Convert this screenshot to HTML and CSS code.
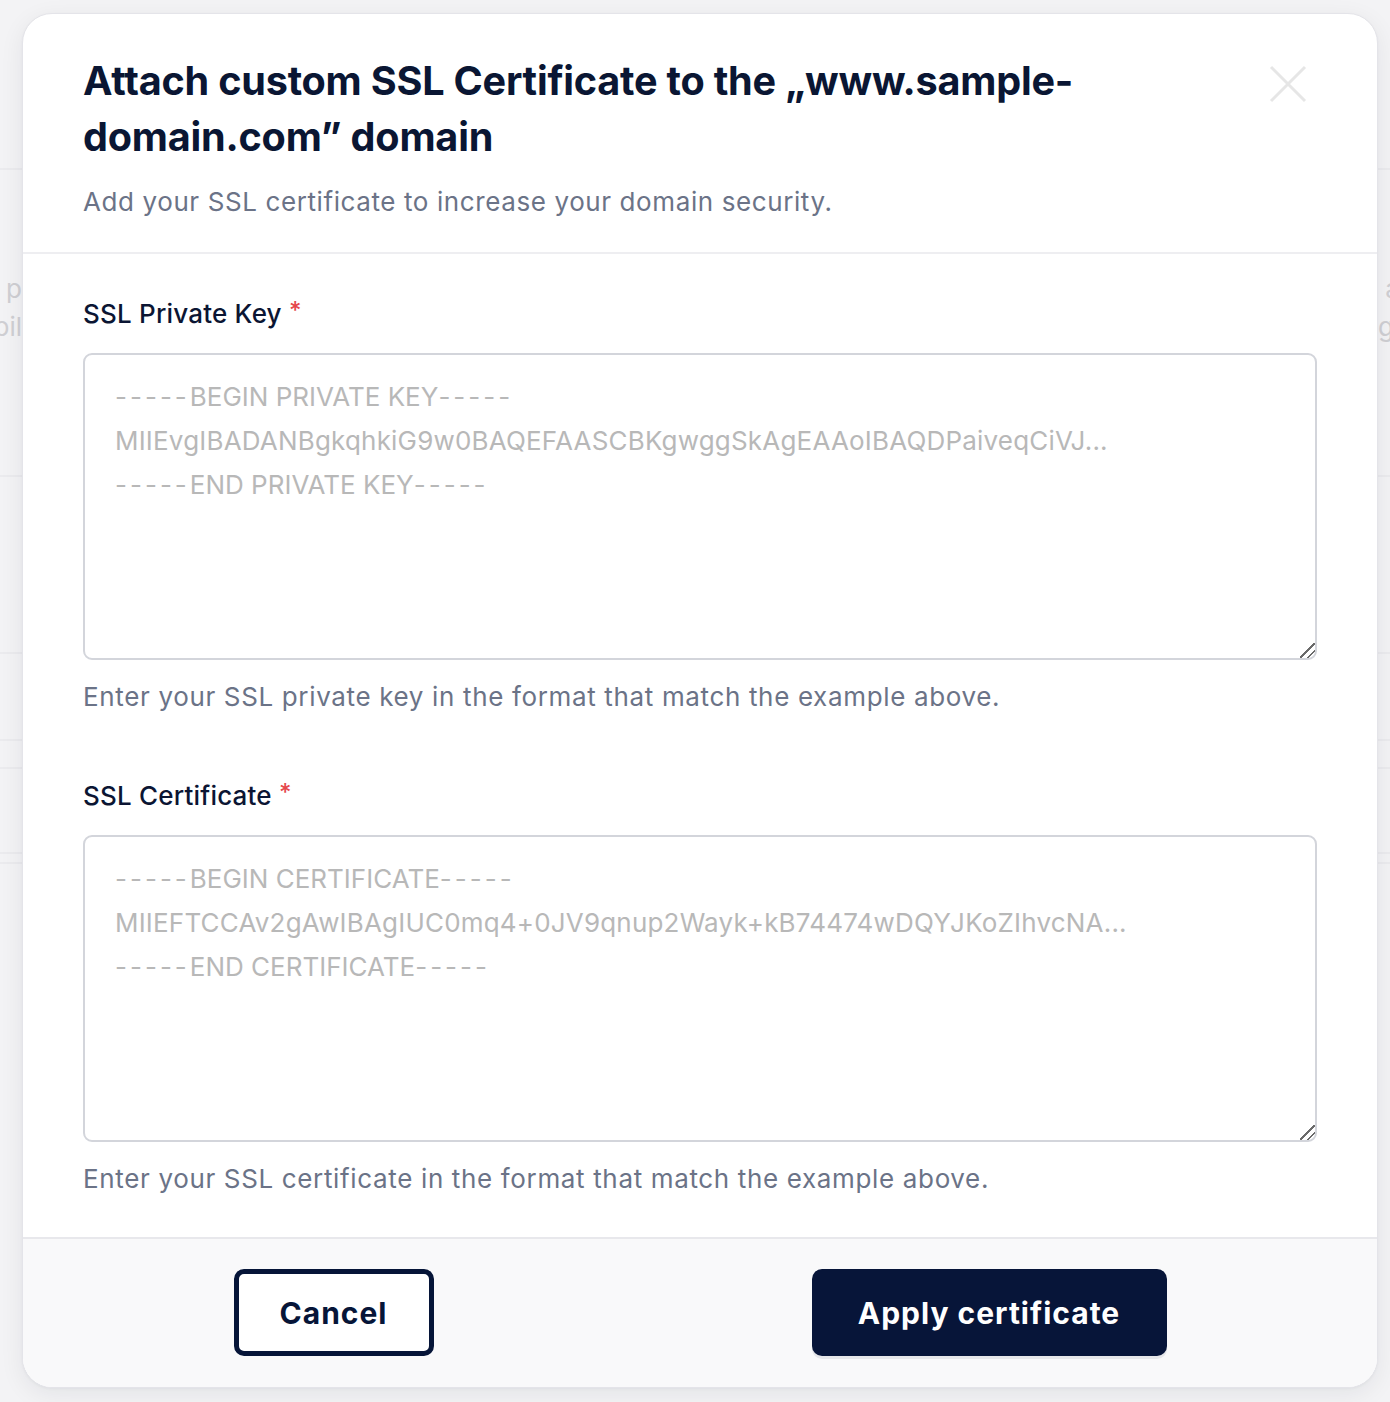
FILE: index.html
```html
<!DOCTYPE html>
<html lang="en">
<head>
<meta charset="utf-8">
<title>Attach custom SSL Certificate</title>
<link rel="stylesheet" href="styles.css">
</head>
<body>
<div class="backdrop">
  <div class="bg-row bg-row-top"></div>
  <div class="bg-row bg-row-tall">
    <div class="bg-left"><span>list of p</span><span>mobil</span></div>
    <div class="bg-right"><span>&nbsp;a</span><span>ge</span></div>
  </div>
  <div class="bg-row bg-row-mid"></div>
  <div class="bg-row bg-row-sm"></div>
  <div class="bg-row bg-row-xs"></div>
  <div class="bg-row bg-row-md"></div>
  <div class="bg-row bg-row-xs2"></div>
</div>

<div class="modal" role="dialog" aria-labelledby="modal-title">
  <header class="modal-header">
    <div class="header-text">
      <h1 id="modal-title" class="modal-title">Attach custom SSL Certificate to the „www.sample-domain.com” domain</h1>
      <p class="modal-subtitle">Add your SSL certificate to increase your domain security.</p>
    </div>
    <button class="close-btn" aria-label="Close">
      <svg width="38" height="38" viewBox="0 0 38 38" aria-hidden="true">
        <path d="M2 2 L36 36 M36 2 L2 36" stroke="#e6e6e6" stroke-width="3" stroke-linecap="butt" fill="none"/>
      </svg>
    </button>
  </header>

  <div class="modal-body">
    <div class="field">
      <label class="field-label">SSL Private Key <span class="req">*</span></label>
      <div class="textbox">
        <div class="placeholder"><span class="dashes">-----</span>BEGIN PRIVATE KEY<span class="dashes">-----</span></div>
        <div class="placeholder code">MIIEvgIBADANBgkqhkiG9w0BAQEFAASCBKgwggSkAgEAAoIBAQDPaiveqCiVJ...</div>
        <div class="placeholder"><span class="dashes">-----</span>END PRIVATE KEY<span class="dashes">-----</span></div>
      </div>
      <p class="field-help">Enter your SSL private key in the format that match the example above.</p>
    </div>

    <div class="field">
      <label class="field-label">SSL Certificate <span class="req">*</span></label>
      <div class="textbox">
        <div class="placeholder"><span class="dashes">-----</span>BEGIN CERTIFICATE<span class="dashes">-----</span></div>
        <div class="placeholder code">MIIEFTCCAv2gAwIBAgIUC0mq4+0JV9qnup2Wayk+kB74474wDQYJKoZIhvcNA...</div>
        <div class="placeholder"><span class="dashes">-----</span>END CERTIFICATE<span class="dashes">-----</span></div>
      </div>
      <p class="field-help">Enter your SSL certificate in the format that match the example above.</p>
    </div>
  </div>

  <footer class="modal-footer">
    <button class="btn btn-outline">Cancel</button>
    <button class="btn btn-primary">Apply certificate</button>
  </footer>
</div>
</body>
</html>
```

FILE: styles.css
```css
* { box-sizing: border-box; }

html, body {
  margin: 0;
  padding: 0;
}

body {
  width: 1390px;
  height: 1402px;
  background: #f3f3f5;
  font-family: "Inter", "DejaVu Sans", sans-serif;
  position: relative;
  overflow: hidden;
}

/* faint page behind the dialog */
.backdrop {
  display: flex;
  flex-direction: column;
}

.bg-row {
  border-bottom: 2px solid #ebebee;
}

.bg-row-top { height: 170px; }
.bg-row-tall {
  height: 307px;
  display: flex;
  justify-content: space-between;
  padding-top: 100px;
}
.bg-row-mid { height: 177px; }
.bg-row-sm { height: 87px; }
.bg-row-xs { height: 28px; }
.bg-row-md { height: 85px; }
.bg-row-xs2 { height: 10px; }

.bg-left, .bg-right {
  display: flex;
  flex-direction: column;
  font-size: 26px;
  line-height: 38px;
  color: #cfcfd3;
  white-space: nowrap;
}

.bg-left {
  width: 22px;
  overflow: hidden;
  direction: rtl;
  text-align: right;
}

.bg-right {
  width: 12px;
  overflow: hidden;
}

/* dialog */
.modal {
  position: absolute;
  top: 13px;
  left: 22px;
  width: 1356px;
  background: #ffffff;
  border: 1px solid #e4e4e9;
  border-radius: 30px;
  box-shadow: 0 6px 24px rgba(20, 24, 40, 0.07), 0 1px 3px rgba(20, 24, 40, 0.04);
  overflow: hidden;
}

.modal-header {
  display: flex;
  align-items: flex-start;
  justify-content: space-between;
  padding: 39px 60px 32px 60px;
  border-bottom: 2px solid #eeeef1;
}

.header-text {
  flex: 1;
  max-width: 1120px;
}

.modal-title {
  margin: 0;
  font-family: "Inter", "DejaVu Sans", sans-serif;
  font-weight: 700;
  font-size: 39.6px;
  line-height: 56px;
  letter-spacing: -0.2px;
  color: #0a1633;
}

.modal-subtitle {
  margin: 19px 0 0 0;
  font-size: 26px;
  line-height: 36px;
  letter-spacing: 0.6px;
  color: #6b7387;
}

.close-btn {
  margin: 12px 10px 0 0;
  padding: 0;
  border: 0;
  background: transparent;
  width: 38px;
  height: 38px;
  cursor: pointer;
}

.close-btn svg { display: block; }

.modal-body {
  padding: 39px 60px 40px 60px;
  display: flex;
  flex-direction: column;
  gap: 60px;
}

.field {
  display: flex;
  flex-direction: column;
}

.field-label {
  font-size: 26px;
  line-height: 36px;
  font-weight: 500;
  letter-spacing: 0.2px;
  color: #0b1533;
  margin-bottom: 21px;
}

.req {
  color: #e5484d;
  font-size: 24px;
  vertical-align: 4px;
  margin-left: 0;
}

.textbox {
  height: 307px;
  border: 2px solid #d3d5db;
  border-radius: 9px;
  padding: 20px 30px;
  resize: vertical;
  overflow: auto;
  background: #fff;
}

.textbox::-webkit-resizer {
  background:
    linear-gradient(135deg,
      transparent 0, transparent 46%,
      #6a6a6a 46%, #6a6a6a 54%,
      transparent 54%, transparent 71%,
      #6a6a6a 71%, #6a6a6a 79%,
      transparent 79%);
}

.placeholder {
  font-size: 26px;
  line-height: 44px;
  color: #b8b8b8;
  white-space: nowrap;
}

.placeholder .dashes {
  letter-spacing: 3px;
}

.placeholder.code {
  letter-spacing: 0.19px;
}

.field-help {
  margin: 19px 0 0 0;
  font-size: 26px;
  line-height: 36px;
  letter-spacing: 0.65px;
  color: #6b7387;
}

.modal-footer {
  background: #f9f9fa;
  border-top: 2px solid #e8e8ec;
  display: flex;
  justify-content: center;
  gap: 378px;
  padding: 30px 0 31px 0;
}

.btn {
  height: 87px;
  border-radius: 10px;
  font-family: "Inter", "DejaVu Sans", sans-serif;
  font-size: 30px;
  font-weight: 700;
  letter-spacing: 1px;
  cursor: pointer;
}

.btn-outline {
  width: 200px;
  background: #ffffff;
  border: 5px solid #061538;
  color: #061538;
}

.btn-primary {
  width: 355px;
  background: #071539;
  border: 0;
  color: #ffffff;
  box-shadow: 0 3px 0 rgba(7, 21, 57, 0.08);
}
```
